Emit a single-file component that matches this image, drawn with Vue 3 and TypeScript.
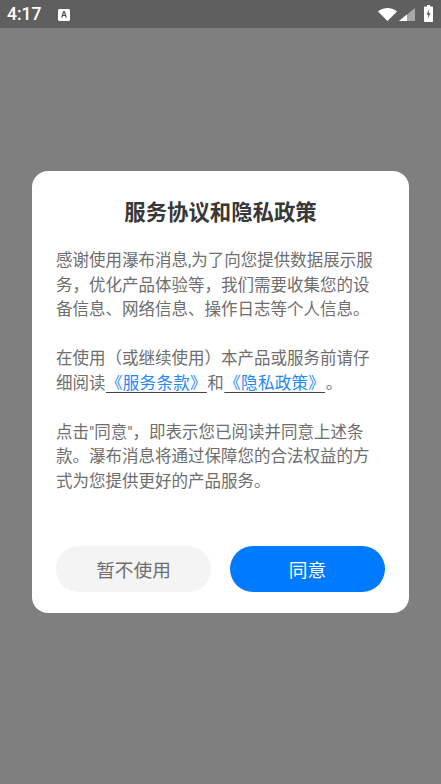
<script setup lang="ts">
const title = '服务协议和隐私政策'
</script>

<template>
  <div class="page">
    <div class="status">
      <div class="status-left">
        <span class="time">4:17</span>
        <svg class="a-icon" width="12" height="12" viewBox="0 0 12 12">
          <rect width="12" height="12" rx="1.5" fill="#fff" />
          <path d="M3 8.5 5.400 2h1.200L9 8.500H7.700L7.200 7H4.800l-.5 1.500zM5.200 5.900h1.600L6 3.600z" fill="#4a4a4a" />
        </svg>
      </div>
      <div class="status-right">
        <svg class="wifi" width="19" height="13" viewBox="0 0 19 13"><path d="M0 3.600C2.500 1.300 5.800 0 9.500 0S16.500 1.300 19 3.600L9.500 13z" fill="#fff" /></svg>
        <svg class="signal" width="16" height="13" viewBox="0 0 16 13">
          <path d="M0 13 16 0v13z" fill="#a6a6a6" />
          <path d="M0 13 8 6.500V13z" fill="#fff" />
        </svg>
        <svg class="battery" width="9" height="17" viewBox="0 0 9 17">
          <path d="M3 0h3v1.500h2.200c.4 0 .8.4.8.8V16.200c0 .4-.4.8-.8.8H.8c-.4 0-.8-.4-.8-.8V2.300c0-.4.4-.8.8-.8H3z" fill="#fff" />
          <path d="M5.300 4 2.500 9.700h1.800L3.700 14l2.800-6H4.700z" fill="#5f5f5f" />
        </svg>
      </div>
    </div>
    <main class="overlay">
      <section class="card">
        <h1 class="title">{{ title }}</h1>
        <div class="body">
          <p>感谢使用瀑布消息,为了向您提供数据展示服务，优化产品体验等，我们需要收集您的设备信息、网络信息、操作日志等个人信息。</p>
          <p>在使用（或继续使用）本产品或服务前请仔细阅读<a class="link">《服务条款》</a>和<a class="link">《隐私政策》</a>。</p>
          <p>点击"同意"，即表示您已阅读并同意上述条款。瀑布消息将通过保障您的合法权益的方式为您提供更好的产品服务。</p>
        </div>
        <div class="actions">
          <button class="btn ghost">暂不使用</button>
          <button class="btn primary">同意</button>
        </div>
      </section>
    </main>
  </div>
</template>

<style>
html, body { margin: 0; background: #7f7f7f; }
</style>

<style scoped>
.page {
  width: 441px;
  height: 784px;
  overflow: hidden;
  display: flex;
  flex-direction: column;
  background: #7f7f7f;
  font-family: Roboto, "Noto Sans CJK SC", sans-serif;
  text-spacing-trim: space-all;
}
.status {
  height: 28px;
  flex: none;
  background: #5f5f5f;
  display: flex;
  align-items: center;
  justify-content: space-between;
  padding: 0 8px 0 7px;
}
.status-left { display: flex; align-items: center; gap: 17px; }
.time {
  width: 34px;
  white-space: nowrap;
  font-weight: 500;
  font-size: 17.5px;
  color: #fff;
}
.a-icon { margin-top: 2px; }
.status-right { display: flex; align-items: center; gap: 2px; }
.wifi, .signal { margin-top: 1px; }
.battery { margin-left: 7px; margin-bottom: 1px; }
.overlay { flex: 1; padding: 143px 32px 0; }
.card {
  box-sizing: border-box;
  width: 377px;
  height: 442px;
  background: #fff;
  border-radius: 16px;
  padding: 26px 24px 21px;
  display: flex;
  flex-direction: column;
}
.title {
  margin: 0;
  text-align: center;
  font-size: 21.4px;
  line-height: 32px;
  font-weight: 700;
  color: #383838;
}
.body {
  flex: 1;
  margin-top: 20px;
  font-size: 16.5px;
  line-height: 24.7px;
  color: #6e6e6e;
}
.body p { margin: 0 0 24px; }
.link {
  margin: 0 0.5px;
  letter-spacing: 0.3px;
  color: #1f8af7;
  text-decoration: underline;
  text-decoration-color: #444;
  text-underline-offset: 3px;
}
.actions { display: flex; justify-content: space-between; }
.btn {
  width: 155px;
  height: 46px;
  border: 0;
  padding: 0 0 2px;
  border-radius: 23px;
  font-family: inherit;
  font-size: 18.7px;
}
.ghost { background: #f4f4f4; color: #6e6e6e; }
.primary { background: #007aff; color: #fff; }
</style>
